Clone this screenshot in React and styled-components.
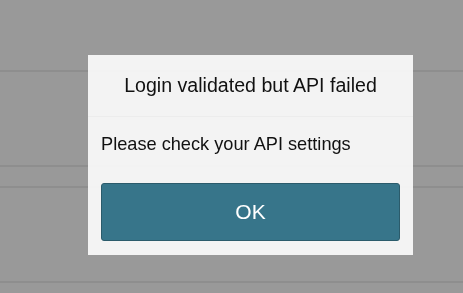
import React from 'react'
import styled, { createGlobalStyle } from 'styled-components'

const GlobalStyle = createGlobalStyle`
  html, body {
    margin: 0;
    padding: 0;
    background: #999999;
    font-family: "Liberation Sans", Arial, sans-serif;
  }
`

const Page = styled.div`
  width: 463px;
  height: 293px;
  overflow: hidden;
  background: #999999;
`

const Row = styled.div`
  height: ${(p) => p.h}px;
  border-bottom: 2px solid #8e8e8e;
  box-sizing: border-box;
`

const Overlay = styled.div`
  position: fixed;
  left: 88px;
  top: 55px;
  width: 325px;
  height: 200px;
  background: rgba(246, 246, 246, 0.97);
  display: flex;
  flex-direction: column;
`

const Header = styled.div`
  height: 62px;
  display: flex;
  align-items: center;
  justify-content: center;
  border-bottom: 1px solid #ececec;
  box-sizing: border-box;
  font-size: 19.6px;
  color: #111;
`

const Body = styled.div`
  flex: 1;
  display: flex;
  flex-direction: column;
  padding: 0 13px 14px;
`

const Message = styled.div`
  font-size: 18.2px;
  color: #111;
  padding-top: 17px;
  height: 49px;
  box-sizing: border-box;
`

const OkButton = styled.button`
  margin-top: auto;
  height: 58px;
  width: 100%;
  background: #37758a;
  border: 1px solid #2b5b6b;
  border-radius: 3px;
  color: #ffffff;
  font-family: "Liberation Sans", Arial, sans-serif;
  font-size: 21px;
  cursor: pointer;
`

export default function App() {
  return (
    <>
      <GlobalStyle />
      <Page>
        <Row h={72} />
        <Row h={95} />
        <Row h={21} />
        <Row h={95} />
      </Page>
      <Overlay>
        <Header>Login validated but API failed</Header>
        <Body>
          <Message>Please check your API settings</Message>
          <OkButton>OK</OkButton>
        </Body>
      </Overlay>
    </>
  )
}
